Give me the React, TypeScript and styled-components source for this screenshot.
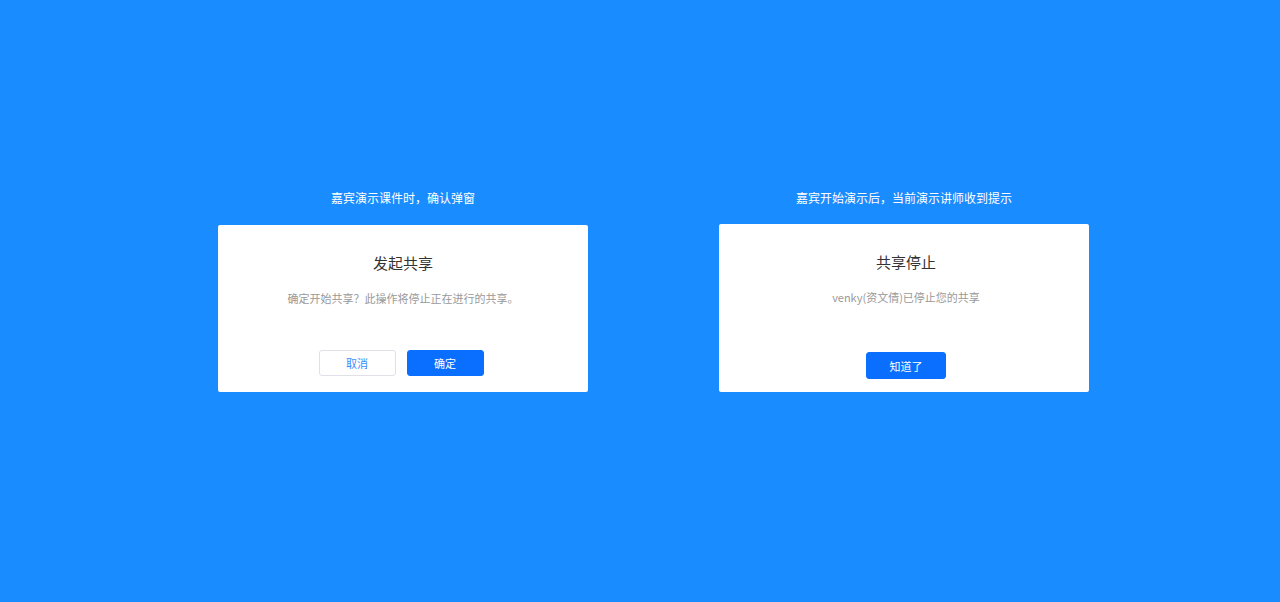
import * as React from 'react';
import styled, {createGlobalStyle} from 'styled-components';

const GlobalStyle = createGlobalStyle`
  html, body {
    margin: 0;
    padding: 0;
    background: #198cff;
    font-family: "Noto Sans CJK SC", "Noto Sans", sans-serif;
  }
`;

const Page = styled.div`
  width: 1280px;
  height: 602px;
  box-sizing: border-box;
  padding: 188px 0 0 218px;
  display: flex;
  gap: 131px;
  align-items: flex-start;
`;

const Column = styled.div`
  width: 370px;
  display: flex;
  flex-direction: column;
  align-items: stretch;
`;

const Caption = styled.div<{ $gap: number }>`
  color: #fff;
  font-size: 12px;
  line-height: 20px;
  text-align: center;
  margin-bottom: ${(p) => p.$gap}px;
`;

const Card = styled.div<{ $height: number; $offset: number }>`
  background: #fff;
  height: ${(p) => p.$height}px;
  box-sizing: border-box;
  border-radius: 2px;
  padding: 26px 0 0 ${(p) => p.$offset}px;
  display: flex;
  flex-direction: column;
  align-items: center;
`;

const Title = styled.div`
  font-size: 15px;
  line-height: 24px;
  font-weight: 400;
  color: #333;
`;

const Message = styled.div`
  margin-top: 14px;
  font-size: 11px;
  line-height: 18px;
  color: #999;
`;

const Footer = styled.div<{ $top: number; $shift: number }>`
  margin-top: ${(p) => p.$top}px;
  margin-right: ${(p) => p.$shift}px;
  display: flex;
  gap: 11px;
`;

const Button = styled.button<{ $primary?: boolean; $width: number; $height: number }>`
  width: ${(p) => p.$width}px;
  height: ${(p) => p.$height}px;
  box-sizing: border-box;
  border-radius: 3px;
  font-family: inherit;
  font-size: 11px;
  padding: 0;
  cursor: pointer;
  background: ${(p) => (p.$primary ? '#0a6fff' : '#fff')};
  color: ${(p) => (p.$primary ? '#fff' : '#3c8cff')};
  border: 1px solid ${(p) => (p.$primary ? '#0a6fff' : '#dfe1e6')};
`;

export default function App() {
  return (
    <>
      <GlobalStyle />
      <Page>
        <Column>
          <Caption $gap={17}>嘉宾演示课件时，确认弹窗</Caption>
          <Card $height={167} $offset={0}>
            <Title>发起共享</Title>
            <Message>确定开始共享？此操作将停止正在进行的共享。</Message>
            <Footer $top={43} $shift={4}>
              <Button $width={77} $height={26}>取消</Button>
              <Button $primary $width={77} $height={26}>确定</Button>
            </Footer>
          </Card>
        </Column>
        <Column>
          <Caption $gap={16}>嘉宾开始演示后，当前演示讲师收到提示</Caption>
          <Card $height={168} $offset={4}>
            <Title>共享停止</Title>
            <Message>venky(资文倩)已停止您的共享</Message>
            <Footer $top={46} $shift={0}>
              <Button $primary $width={80} $height={27}>知道了</Button>
            </Footer>
          </Card>
        </Column>
      </Page>
    </>
  );
}
